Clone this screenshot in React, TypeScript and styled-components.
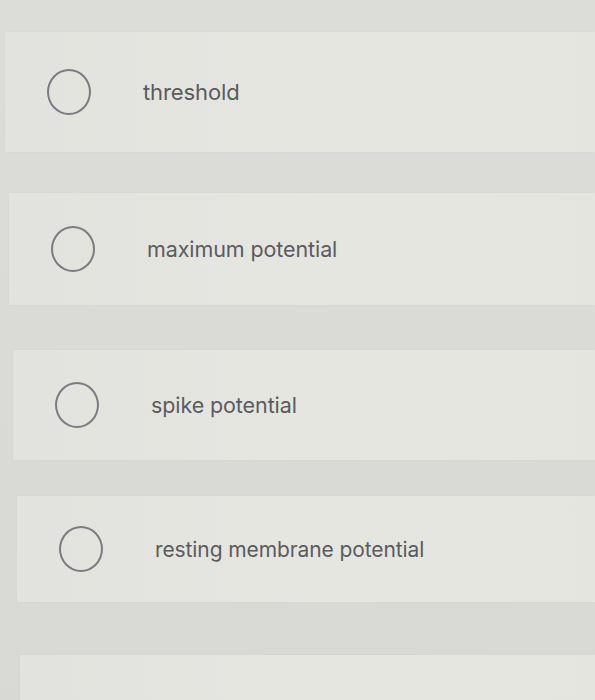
import React from 'react';
import styled, { createGlobalStyle } from 'styled-components';

const GlobalStyle = createGlobalStyle`
  html, body {
    margin: 0;
    padding: 0;
    background: #d9dad5;
  }
  body {
    font-family: Inter, "Liberation Sans", sans-serif;
  }
`;

const Page = styled.div`
  width: 595px;
  height: 700px;
  overflow: hidden;
  padding-top: 32px;
  box-sizing: border-box;
  background: linear-gradient(180deg, #dcddd8 0%, #d8d9d4 100%);
  display: flex;
  flex-direction: column;
`;

const Option = styled.label<{ $height: number; $gap: number; $indent: number }>`
  display: flex;
  align-items: center;
  flex-shrink: 0;
  height: ${p => p.$height}px;
  margin-bottom: ${p => p.$gap}px;
  margin-left: ${p => 5 + p.$indent}px;
  padding-left: 42px;
  background: linear-gradient(90deg, #e2e3de 0%, #e6e6e1 50%, #e5e5e0 100%);
  box-shadow: 0 0 3px rgba(0, 0, 0, 0.03);
  cursor: pointer;
`;

const Radio = styled.span`
  width: 44px;
  height: 46px;
  border: 2px solid #7b7c81;
  border-radius: 50%;
  box-sizing: border-box;
  flex-shrink: 0;
`;

const Text = styled.span<{ $size: number }>`
  margin-left: 52px;
  font-size: ${p => p.$size}px;
  color: #5a5b60;
  letter-spacing: -0.1px;
`;

const options = [
  { label: 'threshold', height: 120, gap: 41, indent: 0, size: 22 },
  { label: 'maximum potential', height: 112, gap: 45, indent: 4, size: 21.5 },
  { label: 'spike potential', height: 110, gap: 36, indent: 8, size: 21.5 },
  { label: 'resting membrane potential', height: 106, gap: 53, indent: 12, size: 21 },
  { label: '', height: 60, gap: 0, indent: 15, size: 21 },
];

export default function App() {
  return (
    <>
      <GlobalStyle />
      <Page>
        {options.map((o, i) => (
          <Option key={i} $height={o.height} $gap={o.gap} $indent={o.indent}>
            {o.label && (
              <>
                <Radio />
                <Text $size={o.size}>{o.label}</Text>
              </>
            )}
          </Option>
        ))}
      </Page>
    </>
  );
}
